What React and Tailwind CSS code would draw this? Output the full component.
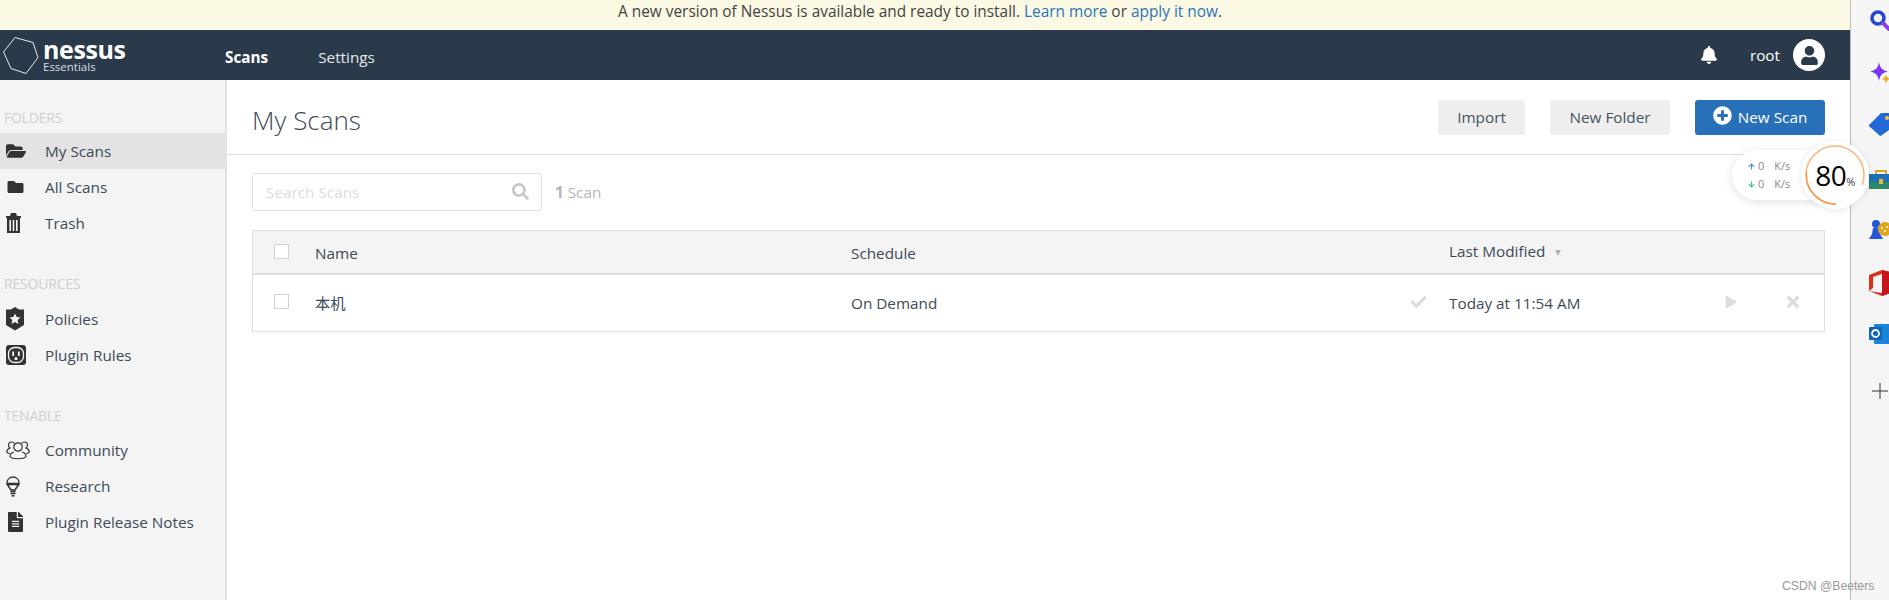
import React from 'react';
import { FaFolderOpen, FaFolder, FaBell, FaUser, FaPlusCircle, FaSearch, FaCheck, FaPlay, FaTimes, FaFileAlt, FaArrowUp, FaArrowDown } from 'react-icons/fa';

const TrashIcon = () => (
  <svg width="15" height="20" viewBox="0 0 15 20" fill="#333">
    <path d="M5 0h5l1 3h4v2H0V3h4z" />
    <path d="M1 5h13v15H1zM3.4 7v11h1.6V7zm3.3 0v11h1.6V7zm3.3 0v11h1.6V7z" fillRule="evenodd" />
  </svg>
);

const ShieldIcon = () => (
  <svg width="18" height="24" viewBox="0 0 18 24">
    <path d="M9 0l4 2.5h5v15.500L9 23.500 0 18V2.500h5z" fill="#333" />
    <path d="M9 6.500l1.700 3.500 3.800.5-2.800 2.600.7 3.800L9 15l-3.400 1.900.7-3.800-2.800-2.600 3.800-.5z" fill="#f4f4f4" />
  </svg>
);

const PlugIcon = () => (
  <svg width="20" height="20" viewBox="0 0 20 20">
    <rect width="20" height="20" rx="3" fill="#333" />
    <rect x="2.500" y="2.500" width="15" height="15" rx="6" fill="none" stroke="#f4f4f4" strokeWidth="1.300" />
    <rect x="6.300" y="6.500" width="1.800" height="4.500" fill="#f4f4f4" />
    <rect x="11.900" y="6.500" width="1.800" height="4.500" fill="#f4f4f4" />
    <path d="M8.600 15v-1.500a1.400 1.400 0 0 1 2.800 0V15z" fill="#f4f4f4" />
  </svg>
);

const CommunityIcon = () => (
  <svg width="24" height="19" viewBox="0 0 24 19" fill="none" stroke="#333" strokeWidth="1.200">
    <circle cx="12" cy="6" r="4.200" />
    <path d="M8 11c-3 .8-4 2.500-4 4.500 2 3 14 3 16 0 0-2-1-3.700-4-4.500" />
    <path d="M8.500 2.500C7.800 1.300 6.600 1 5.500 1 3.500 1 2.500 2.600 2.500 4.200c0 1.200.6 2.300 1.500 2.800C2 7.800.8 9.200.7 11c.5.800 1.700 1.300 3 1.500" />
    <path d="M15.500 2.500c.7-1.200 1.900-1.500 3-1.500 2 0 3 1.600 3 3.200 0 1.200-.6 2.300-1.500 2.800 2 .8 3.200 2.200 3.300 4-.5.800-1.700 1.300-3 1.500" />
  </svg>
);

const BulbIcon = () => (
  <svg width="14" height="21" viewBox="0 0 14 21" fill="none" stroke="#333" strokeWidth="1.300">
    <path d="M1 6.500a6 5.500 0 0 1 12 0c0 .4 0 .6-.1 1H1.100C1 7.100 1 6.900 1 6.500z" />
    <path d="M1.300 8.500h11.400L9 14H5z" strokeWidth="1.600" />
    <path d="M4.500 15.500h5M4.500 17.500h5" strokeWidth="1.500" />
    <path d="M5.500 19.800h3" strokeWidth="1.500" />
  </svg>
);

const SideLink = ({ icon, label, active }) => (
  <a className={`flex h-[36px] items-center text-[15.3px] text-[#3d4a58] ${active ? 'bg-[#e3e3e3]' : ''}`}>
    <span className="flex w-[45px] shrink-0 items-center pl-[6px] text-[#333]">{icon}</span>
    {label}
  </a>
);

const SideHeading = ({ children, className }) => (
  <div className={`pl-[4px] text-[14px] leading-[20px] tracking-[-0.2px] text-[#d0d0d0] ${className}`}>{children}</div>
);

const Checkbox = () => <span className="block h-[15px] w-[15px] border border-[#d2d2d2] bg-white" />;

const Btn = ({ children, className }) => (
  <button className={`flex h-[35px] items-center justify-center rounded-[3px] text-[15.3px] ${className}`}>{children}</button>
);

function RailIcons() {
  return (
    <div className="flex flex-col items-start overflow-hidden pl-[18px] pt-[8px]">
      <svg className="shrink-0" width="24" height="24" viewBox="0 0 24 24" fill="none">
        <circle cx="9" cy="10" r="6" stroke="#2346d6" strokeWidth="3.500" />
        <path d="M14 15l6 6" stroke="#8a3fe0" strokeWidth="4" strokeLinecap="round" />
      </svg>
      <svg className="mt-[28px] shrink-0" width="24" height="24" viewBox="0 0 24 24">
        <path d="M10 2c1 6 3 8 9 9.500-6 1.500-8 3.500-9 9.500-1-6-3-8-9-9.500C7 10 9 8 10 2z" fill="#7b35f0" />
        <path d="M17 14c.5 3 1.500 4 4.500 5-3 .7-4 1.700-4.500 5-.5-3.300-1.500-4.300-4.500-5 3-1 4-2 4.500-5z" fill="#eeb11e" />
      </svg>
      <svg className="mt-[28px] shrink-0" width="24" height="24" viewBox="0 0 24 24">
        <path d="M0 13L12 1h12v14L13 23a2 2 0 0 1-3 0L1 15a2 2 0 0 1-1-2z" fill="#2468d8" />
        <circle cx="18" cy="6" r="2" fill="#f2c53d" />
      </svg>
      <svg className="mt-[32px] shrink-0" width="24" height="24" viewBox="0 0 24 24">
        <path d="M7 6V3h10v3" fill="none" stroke="#e0a020" strokeWidth="1.800" />
        <rect x="0" y="6" width="24" height="8" fill="#1d6fb8" />
        <rect x="0" y="14" width="24" height="7" fill="#2b8a6c" />
        <rect x="10" y="11" width="4" height="5" fill="#f0b92d" />
      </svg>
      <svg className="mt-[27px] shrink-0" width="24" height="24" viewBox="0 0 24 24">
        <circle cx="7" cy="5" r="4" fill="#2456d8" />
        <path d="M4 9h6l1 6 3 5H0l3-5z" fill="#2456d8" />
        <circle cx="16" cy="10" r="7" fill="#e3a51c" />
        <circle cx="13" cy="9" r="1" fill="#fff" />
        <circle cx="18" cy="8" r="1" fill="#fff" />
        <circle cx="16" cy="12" r="1" fill="#fff" />
      </svg>
      <svg className="mt-[27px] shrink-0" width="24" height="26" viewBox="0 0 24 26">
        <path d="M0 5L13 0l8 2v21l-8 3L0 21l13 2V4L4 7v11L0 21z" fill="#d8321c" />
        <path d="M13 0l8 2v21l-8 3z" fill="#c4161c" />
      </svg>
      <svg className="mt-[26px] shrink-0" width="24" height="24" viewBox="0 0 24 24">
        <rect x="5" y="2" width="19" height="20" rx="1" fill="#1a84d8" />
        <rect x="0" y="5" width="13" height="13" rx="1" fill="#0f64b8" />
        <circle cx="6.500" cy="11.500" r="3.500" fill="none" stroke="#fff" strokeWidth="1.800" />
      </svg>
      <svg className="ml-[3px] mt-[37px] shrink-0" width="16" height="16" viewBox="0 0 16 16">
        <path d="M8 0v16M0 8h16" stroke="#333" strokeWidth="1" />
      </svg>
    </div>
  );
}

export default function App() {
  return (
    <div className="relative flex h-[600px] w-[1889px] overflow-hidden bg-white font-['Open_Sans','Noto_Sans_CJK_SC',sans-serif]">
      <div className="flex w-[1850px] shrink-0 flex-col">
        <div className="flex h-[30px] items-center justify-center bg-[#fbf8e3] pb-[6px] pr-[10px] text-[15.4px] text-[#444]">
          <span>
            A new version of Nessus is available and ready to install. <a className="text-[#2a76b8]">Learn more</a> or{' '}
            <a className="text-[#2a76b8]">apply it now</a>.
          </span>
        </div>
        <header className="flex h-[50px] items-center bg-[#2a3a4a] pr-[25px] text-white">
          <div className="flex w-[225px] items-center pl-[3px]">
            <svg width="36" height="37" viewBox="0 0 36 37" fill="none" stroke="#e8ecef" strokeWidth="1">
              <path d="M12 .5l18 5 5 15-12 16-15-5L.5 15z" />
            </svg>
            <div className="ml-[4px] flex flex-col pt-[2px]">
              <span className="text-[25px] font-bold leading-[20px] tracking-[-0.4px]">nessus</span>
              <span className="mt-[1px] text-[11.5px] leading-[13px] text-[#d8dde2]">Essentials</span>
            </div>
          </div>
          <nav className="flex items-center pt-[5px] text-[15.3px]">
            <a className="font-bold">Scans</a>
            <a className="ml-[50px] text-[#e6e9ec]">Settings</a>
          </nav>
          <div className="ml-auto flex items-center">
            <FaBell className="h-[18px] w-[18px]" />
            <span className="ml-[32px] pt-[1px] text-[15.3px]">root</span>
            <span className="ml-[13px] flex h-[32px] w-[32px] items-end justify-center overflow-hidden rounded-full bg-white pb-[6px]">
              <FaUser className="h-[19px] w-[19px] text-[#2a3a4a]" />
            </span>
          </div>
        </header>
        <div className="flex flex-1">
          <aside className="w-[227px] shrink-0 border-r-2 border-[#e3e3e3] bg-[#f4f4f4] pt-[28px]">
            <SideHeading className="mb-[5px]">FOLDERS</SideHeading>
            <SideLink active label="My Scans" icon={<FaFolderOpen className="h-[18px] w-[20px]" />} />
            <SideLink label="All Scans" icon={<FaFolder className="ml-[1px] h-[16px] w-[17px]" />} />
            <SideLink label="Trash" icon={<TrashIcon />} />
            <SideHeading className="mb-[7px] mt-[33px]">RESOURCES</SideHeading>
            <SideLink label="Policies" icon={<ShieldIcon />} />
            <SideLink label="Plugin Rules" icon={<PlugIcon />} />
            <SideHeading className="mb-[6px] mt-[33px]">TENABLE</SideHeading>
            <SideLink label="Community" icon={<CommunityIcon />} />
            <SideLink label="Research" icon={<BulbIcon />} />
            <SideLink label="Plugin Release Notes" icon={<FaFileAlt className="ml-[2px] h-[20px] w-[15px]" />} />
          </aside>
          <main className="flex-1">
            <div className="flex h-[75px] items-center justify-between border-b border-[#e0e0e0] pl-[25px] pr-[25px]">
              <h1 className="pt-[6px] text-[26px] font-light text-[#3d4a58]">My Scans</h1>
              <div className="flex items-center gap-[25px]">
                <Btn className="w-[87px] bg-[#eee] text-[#46525e]">Import</Btn>
                <Btn className="w-[120px] bg-[#eee] text-[#46525e]">New Folder</Btn>
                <Btn className="w-[130px] gap-[6px] bg-[#2871b8] text-white">
                  <FaPlusCircle className="mb-[3px] h-[19px] w-[19px]" />
                  New Scan
                </Btn>
              </div>
            </div>
            <div className="pl-[25px] pr-[25px]">
              <div className="mt-[18px] flex items-center">
                <div className="flex h-[38px] w-[290px] items-center justify-between rounded-[3px] border border-[#e0e0e0] pl-[13px] pr-[12px]">
                  <span className="text-[15.3px] text-[#dcdcdc]">Search Scans</span>
                  <FaSearch className="mb-[2px] h-[17px] w-[17px] text-[#c8c8c8]" />
                </div>
                <span className="ml-[13px] text-[15.3px] text-[#b5b5b5]">
                  <b>1</b> Scan
                </span>
              </div>
              <div className="mt-[19px] border border-[#e0e0e0] text-[15.3px] text-[#3d4a58]">
                <div className="flex h-[44px] items-center border-b-2 border-[#e0e0e0] bg-[#f4f4f4]">
                  <div className="w-[62px] pb-[2px] pl-[21px]"><Checkbox /></div>
                  <div className="w-[536px] pt-[2px]">Name</div>
                  <div className="w-[598px] pt-[2px]">Schedule</div>
                  <div className="flex items-center pb-[2px]">
                    Last Modified
                    <svg className="ml-[10px] mt-[3px]" width="6" height="6" viewBox="0 0 6 6" fill="#b0b0b0"><path d="M0 0h6L3 6z" /></svg>
                  </div>
                </div>
                <div className="flex h-[56px] items-center">
                  <div className="w-[62px] pb-[3px] pl-[21px]"><Checkbox /></div>
                  <div className="w-[536px]">本机</div>
                  <div className="w-[558px]">On Demand</div>
                  <div className="w-[40px]"><FaCheck className="mb-[2px] h-[16px] w-[19px] text-[#dcdcdc]" /></div>
                  <div className="w-[276px]">Today at 11:54 AM</div>
                  <div className="w-[60px]"><FaPlay className="mb-[2px] h-[12px] w-[12px] text-[#dcdcdc]" /></div>
                  <div><FaTimes className="mb-[2px] h-[18px] w-[16px] text-[#dcdcdc]" /></div>
                </div>
              </div>
            </div>
          </main>
        </div>
      </div>
      <div className="flex-1 border-l border-[#bdbdbd] bg-[#f5f5f5]">
        <RailIcons />
      </div>

      {/* floating speed widget from a browser extension */}
      <div className="absolute left-[1732px] top-[150px] flex h-[50px] w-[90px] flex-col justify-center rounded-l-[25px] bg-white pl-[16px] text-[11px] leading-[18px] text-[#8a8a8a] shadow-[0_2px_10px_rgba(0,0,0,0.12)]">
        <div className="flex items-center"><FaArrowUp className="mr-[3px] h-[7px] w-[7px] text-[#3b8df0]" />0<span className="ml-[10px]">K/s</span></div>
        <div className="flex items-center"><FaArrowDown className="mr-[3px] h-[7px] w-[7px] text-[#2fc96a]" />0<span className="ml-[10px]">K/s</span></div>
      </div>
      <div className="absolute left-[1801px] top-[141px] flex h-[68px] w-[68px] items-center justify-center rounded-full bg-white shadow-[0_1px_6px_rgba(0,0,0,0.1)]">
        <svg className="absolute left-[4px] top-[4px]" width="60" height="60" viewBox="0 0 60 60" fill="none">
          <circle cx="30" cy="30" r="29" stroke="#fbb57a" strokeWidth="1.500" strokeDasharray="146 36" transform="rotate(90 30 30)" strokeLinecap="round" />
          <path d="M30.500 59a29 29 0 0 1-29-31" stroke="#f9964a" strokeWidth="1.500" strokeLinecap="round" />
        </svg>
        <span className="text-[28px] leading-none tracking-[-0.5px] text-black">80<span className="text-[11px] text-[#444]">%</span></span>
      </div>

      <div className="absolute left-[1782px] top-[579px] font-['Liberation_Sans',sans-serif] text-[12.2px] leading-[14px] text-[#999]">CSDN @Beeters</div>
    </div>
  );
}
